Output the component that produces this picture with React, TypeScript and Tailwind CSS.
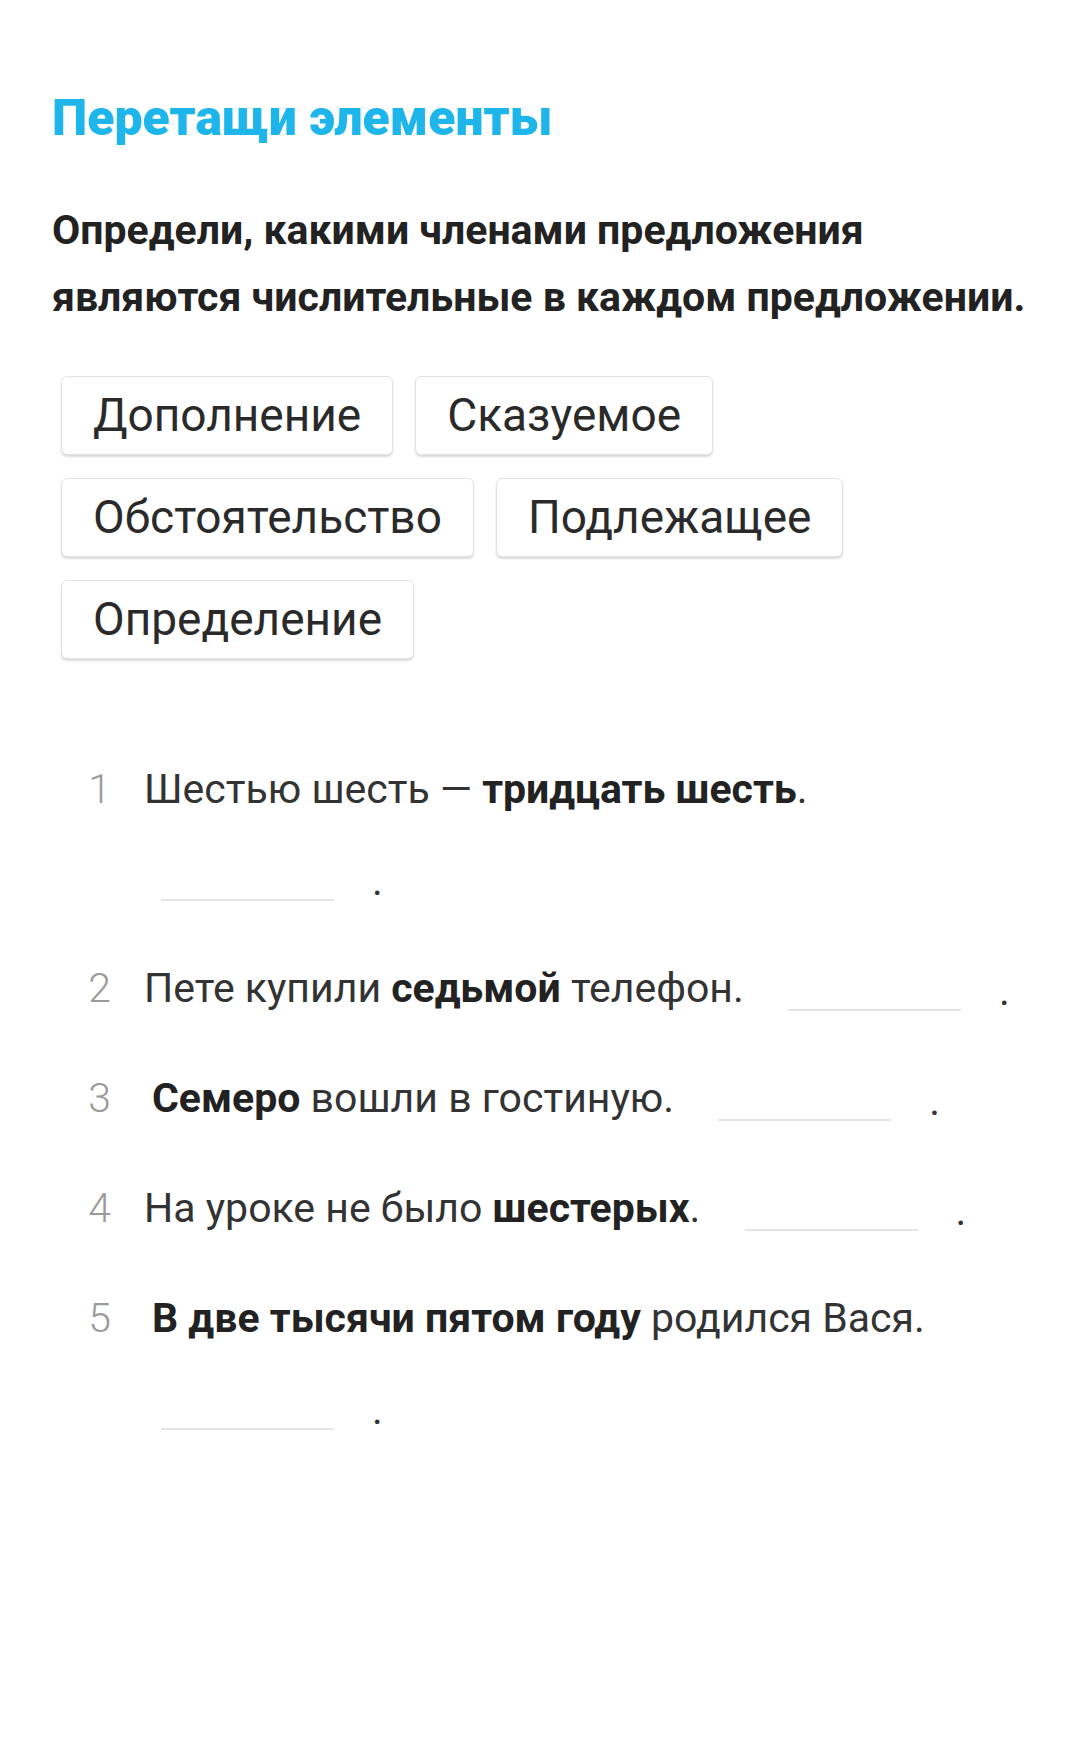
import React from "react";

type Part = { text: string; bold?: boolean };

const chips = ["Дополнение", "Сказуемое", "Обстоятельство", "Подлежащее", "Определение"];

const items: { parts: Part[]; indent?: boolean }[] = [
  { parts: [{ text: "Шестью шесть — " }, { text: "тридцать шесть", bold: true }, { text: "." }] },
  { parts: [{ text: "Пете купили " }, { text: "седьмой", bold: true }, { text: " телефон." }] },
  { parts: [{ text: "Семеро", bold: true }, { text: " вошли в гостиную." }], indent: true },
  { parts: [{ text: "На уроке не было " }, { text: "шестерых", bold: true }, { text: "." }] },
  { parts: [{ text: "В две тысячи пятом году", bold: true }, { text: " родился Вася." }], indent: true },
];

function Blank() {
  return (
    <span className="whitespace-nowrap">
      <span className="ml-[17px] inline-block w-[173px] border-b-2 border-[#e4e4e4] align-[-9px]" />
      <span className="relative top-[3px] ml-[38px]">.</span>
    </span>
  );
}

export default function App() {
  return (
    <div
      className="min-h-[1746px] bg-white px-[52px] pt-[93px]"
      style={{ fontFamily: "Roboto, 'Noto Sans', sans-serif" }}
    >
      <h1 className="text-[50px] font-black leading-none text-[#1eb5ea]">Перетащи элементы</h1>

      <p className="mt-[54px] text-[41px] font-bold leading-[67px] text-[#222]">
        Определи, какими членами предложения
        <br />
        являются числительные в каждом предложении.
      </p>

      <div className="mt-[45px] flex flex-wrap gap-x-[22px] gap-y-[23px] pl-[9px] pr-[150px]">
        {chips.map((c) => (
          <div
            key={c}
            className="flex h-[79px] items-center rounded-md border border-[#e2e2e2] bg-white px-[31px] text-[46px] text-[#2a2a2a] shadow-[0_2px_2px_rgba(0,0,0,0.14)]"
          >
            {c}
          </div>
        ))}
      </div>

      <ol className="mt-[86px] flex flex-col gap-[21px]">
        {items.map((item, i) => (
          <li key={i} className="flex text-[41px] leading-[89px] text-[#333]">
            <span className="w-[59px] shrink-0 text-right font-light text-[#9a9a9a]">{i + 1}</span>
            <p className="ml-[33px] flex-1">
              {item.indent && <span className="inline-block w-[8px]" />}
              {item.parts.map((p, j) =>
                p.bold ? (
                  <b key={j} className="font-bold text-[#222]">
                    {p.text}
                  </b>
                ) : (
                  <span key={j}>{p.text}</span>
                )
              )}
              <span className="inline-block w-[17px]" /> <Blank />
            </p>
          </li>
        ))}
      </ol>
    </div>
  );
}
